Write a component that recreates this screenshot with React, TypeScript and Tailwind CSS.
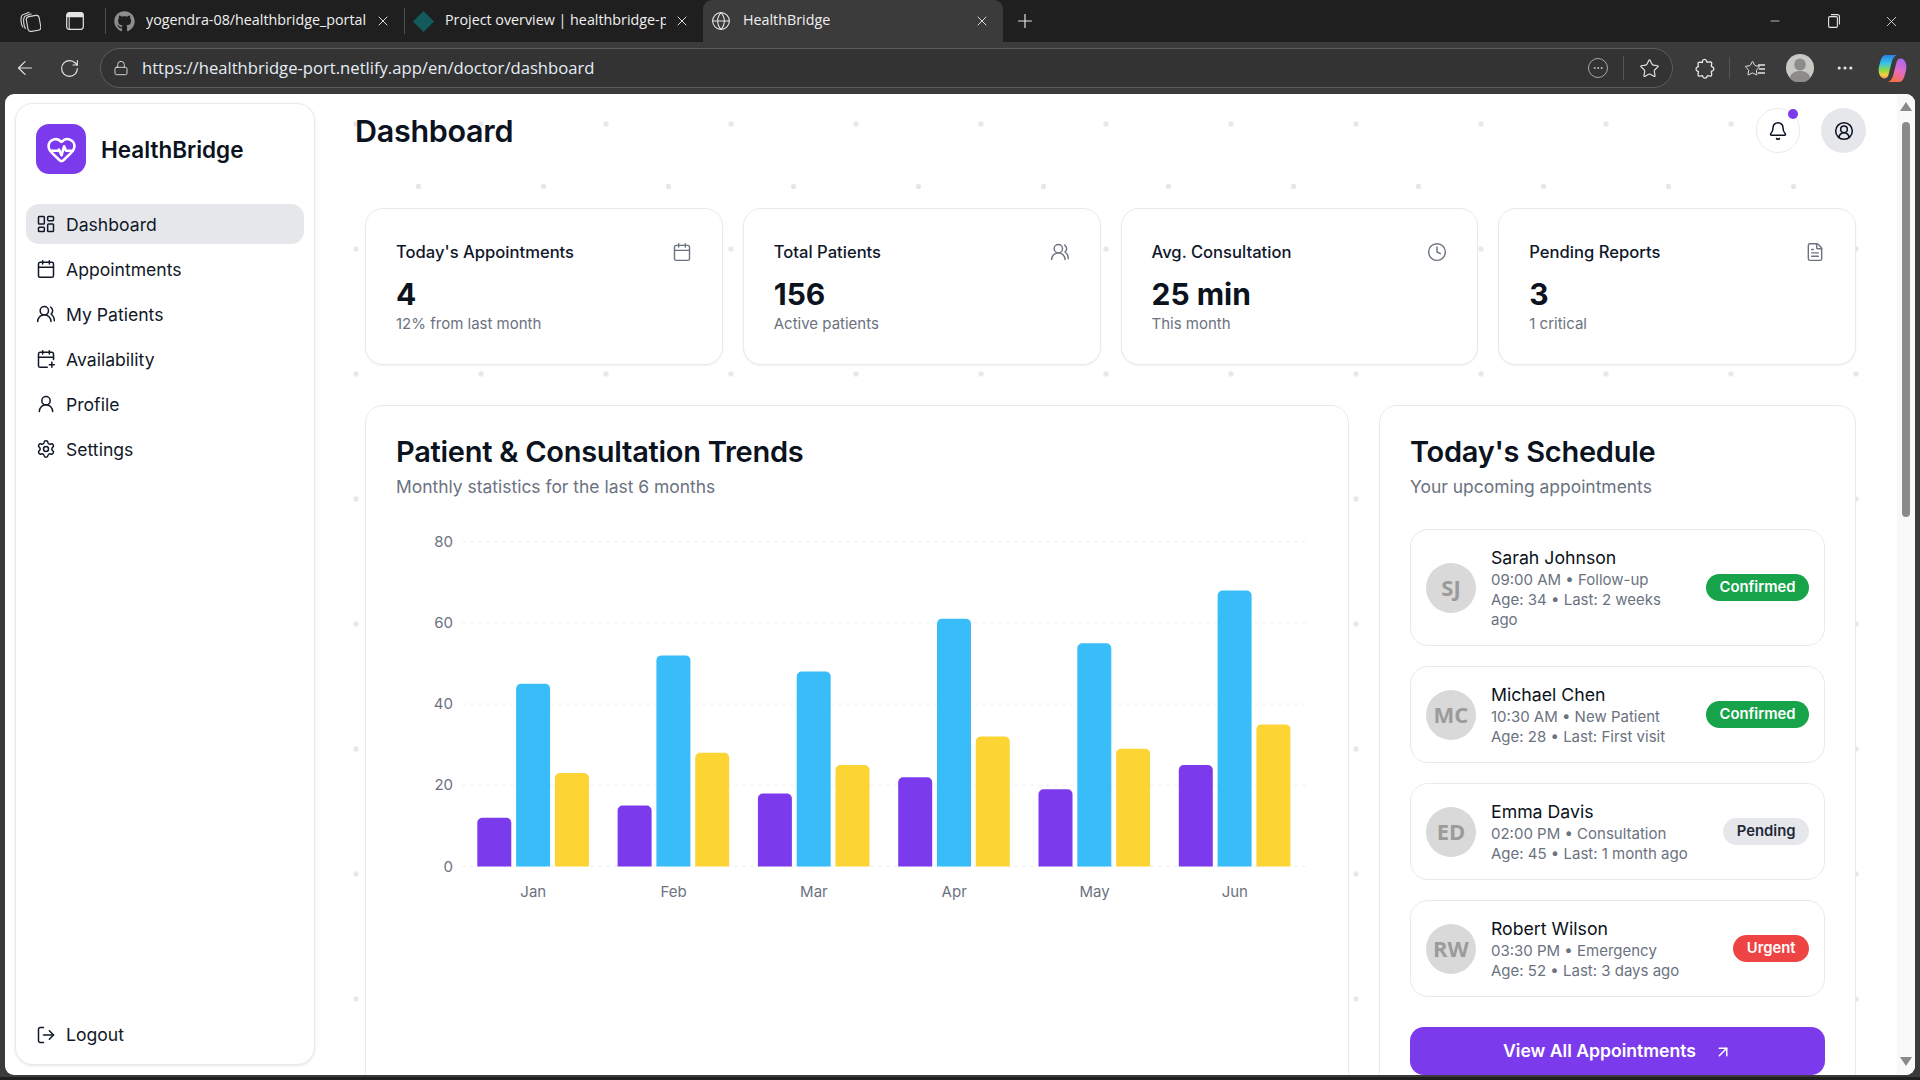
import { FC, ReactNode } from "react";
import {
  ArrowLeft,
  ArrowUpRight,
  Bell,
  Calendar,
  CalendarPlus,
  CircleUserRound,
  Clock,
  Ellipsis,
  FileText,
  Globe,
  HeartPulse,
  LayoutDashboard,
  Lock,
  LogOut,
  Minus,
  Plus,
  RotateCw,
  Settings,
  Star,
  UserRound,
  UsersRound,
  X,
} from "lucide-react";
import { FaGithub } from "react-icons/fa";

const navItems = [
  { label: "Dashboard", icon: LayoutDashboard, active: true },
  { label: "Appointments", icon: Calendar },
  { label: "My Patients", icon: UsersRound },
  { label: "Availability", icon: CalendarPlus },
  { label: "Profile", icon: UserRound },
  { label: "Settings", icon: Settings },
];

const stats = [
  { title: "Today's Appointments", value: "4", note: "12% from last month", icon: Calendar },
  { title: "Total Patients", value: "156", note: "Active patients", icon: UsersRound },
  { title: "Avg. Consultation", value: "25 min", note: "This month", icon: Clock },
  { title: "Pending Reports", value: "3", note: "1 critical", icon: FileText },
];

const chartData = [
  { month: "Jan", a: 12, b: 45, c: 23 },
  { month: "Feb", a: 15, b: 52, c: 28 },
  { month: "Mar", a: 18, b: 48, c: 25 },
  { month: "Apr", a: 22, b: 61, c: 32 },
  { month: "May", a: 19, b: 55, c: 29 },
  { month: "Jun", a: 25, b: 68, c: 35 },
];

const schedule = [
  { initials: "SJ", name: "Sarah Johnson", line1: "09:00 AM • Follow-up", line2: "Age: 34 • Last: 2 weeks ago", status: "Confirmed", badge: "bg-[#16a34a] text-white" },
  { initials: "MC", name: "Michael Chen", line1: "10:30 AM • New Patient", line2: "Age: 28 • Last: First visit", status: "Confirmed", badge: "bg-[#16a34a] text-white" },
  { initials: "ED", name: "Emma Davis", line1: "02:00 PM • Consultation", line2: "Age: 45 • Last: 1 month ago", status: "Pending", badge: "bg-[#e5e7eb] text-[#1f2937]" },
  { initials: "RW", name: "Robert Wilson", line1: "03:30 PM • Emergency", line2: "Age: 52 • Last: 3 days ago", status: "Urgent", badge: "bg-[#ef4444] text-white" },
];

const BASE_Y = 346.5;
const UNIT = 4.06;

const barPath = (x: number, value: number) => {
  const top = BASE_Y - value * UNIT;
  return `M${x} ${BASE_Y}V${top + 5}a5 5 0 0 1 5-5h24a5 5 0 0 1 5 5V${BASE_Y}Z`;
};

const Chart: FC = () => (
  <svg className="block mt-[19px]" width="922" height="400" viewBox="0 0 922 400">
    {[80, 60, 40, 20, 0].map((tick) => {
      const y = BASE_Y - tick * UNIT;
      return (
        <g key={tick}>
          <line x1="66" x2="912" y1={y} y2={y} stroke="#f0f1f3" strokeDasharray="4 4" />
          <text x="57" y={y + 5} textAnchor="end" fontSize="15" fill="#6b7280">
            {tick}
          </text>
        </g>
      );
    })}
    {chartData.map((d, i) => {
      const x = 81.3 + i * 140.3;
      return (
        <g key={d.month}>
          <path d={barPath(x, d.a)} fill="#7c3aed" />
          <path d={barPath(x + 38.8, d.b)} fill="#38bdf8" />
          <path d={barPath(x + 77.6, d.c)} fill="#fcd535" />
          <text x={x + 56} y="377" textAnchor="middle" fontSize="15" fill="#6b7280">
            {d.month}
          </text>
        </g>
      );
    })}
  </svg>
);

const Tab: FC<{ icon: ReactNode; title: string; active?: boolean; width: string }> = ({
  icon,
  title,
  active,
  width,
}) => (
  <div
    className={`${width} h-[42px] flex items-center pl-[5px] pr-[13px] shrink-0 ${
      active ? "bg-[#3b3b3b] rounded-t-[9px]" : ""
    }`}
  >
    <span className="w-[26px] mr-[9px] flex justify-center shrink-0">{icon}</span>
    <span className="flex-1 overflow-hidden whitespace-nowrap text-[14.3px] leading-[20px] -mt-[2px] text-[#f0f0f0]">{title}</span>
    <X size={16} strokeWidth={1.4} className="text-[#e8e8e8] ml-[8px] shrink-0" />
  </div>
);

const BrowserChrome: FC = () => (
  <div className="shrink-0 font-['Open_Sans',sans-serif]">
    <div className="h-[42px] bg-[#1f1f1f] flex items-center text-[#e5e5e5]">
      <div className="w-[105px] flex items-center shrink-0 pl-[20px] gap-[25px]">
        <svg width="21" height="21" viewBox="0 0 21 21" fill="none" stroke="#d8d8d8" strokeWidth="1.1">
          <path d="M3 16.5C1 14 .6 8 1.4 5.5c.3-1 1-1.7 2-2l6-2.3" />
          <path d="M5.6 18C3.6 15 3.2 9 4 6.8c.3-1 1-1.7 2-2l5.5-2" />
          <rect x="7" y="5" width="13" height="15" rx="3" transform="rotate(-10 13 12)" fill="#1f1f1f" />
        </svg>
        <svg width="18" height="18" viewBox="0 0 18 18" fill="none">
          <rect x=".7" y=".7" width="16.6" height="16.6" rx="2.5" stroke="#e5e5e5" strokeWidth="1.2" />
          <path d="M3 .7h12a2.3 2.3 0 0 1 2.3 2.3v2.3H.7V3A2.3 2.3 0 0 1 3 .7Z" fill="#e5e5e5" />
          <path d="M3.2 5v12.3" stroke="#e5e5e5" strokeWidth="1" />
        </svg>
      </div>
      <div className="w-px h-[26px] bg-[#4d4d4d] shrink-0" />
      <Tab width="w-[298px]" title="yogendra-08/healthbridge_portal" icon={<FaGithub size={21} className="text-[#8e8e8e]" />} />
      <div className="w-px h-[26px] bg-[#4d4d4d] shrink-0" />
      <Tab
        width="w-[298px]"
        title="Project overview | healthbridge-port"
        icon={<div className="w-[15px] h-[15px] rotate-45 bg-[#14595c]" />}
      />
      <Tab width="w-[300px]" active title="HealthBridge" icon={<Globe size={20} strokeWidth={1.3} className="text-[#e5e5e5]" />} />
      <Plus size={22} strokeWidth={1.3} className="ml-[11px]" />
      <div className="ml-auto flex items-center pr-[20px]">
        <Minus size={14} strokeWidth={1.3} />
        <svg className="ml-[46px]" width="12" height="14" viewBox="0 0 12 14" fill="none" stroke="#e5e5e5" strokeWidth="1.1">
          <rect x=".6" y="2.6" width="8.8" height="10.8" rx="1.3" />
          <path d="M3 .6h6.4a2 2 0 0 1 2 2v8" />
        </svg>
        <X size={17} strokeWidth={1.2} className="ml-[43px]" />
      </div>
    </div>
    <div className="h-[52px] bg-[#3b3b3b] flex items-center text-[#e5e5e5] pl-[14px]">
      <ArrowLeft size={22} strokeWidth={1.3} />
      <RotateCw size={21} strokeWidth={1.3} className="ml-[23px]" />
      <div className="ml-[20px] w-[1573px] h-[40px] rounded-full border border-[#5c5c5c] bg-[#333333] flex items-center pl-[12px] pr-[12px] shrink-0">
        <Lock size={16} strokeWidth={1.3} />
        <span className="ml-[13px] text-[16.64px] text-[#e6edf5]">https://healthbridge-port.netlify.app/en/doctor/dashboard</span>
        <div className="ml-auto flex items-center">
          <div className="w-[20px] h-[20px] rounded-full border border-[#a8a8a8] flex items-center justify-center text-[#c8c8c8]">
            <Ellipsis size={12} />
          </div>
          <div className="w-px h-[24px] bg-[#555555] mx-[15px]" />
          <Star size={21} strokeWidth={1.3} />
        </div>
      </div>
      <svg className="ml-[22px]" width="20" height="21" viewBox="0 0 20 21" fill="none" stroke="#e5e5e5" strokeWidth="1.3" strokeLinejoin="round">
        <path d="M7.5 2.8c.8-1.8 3.2-1.8 4 0l.4 1.4 3.4-.4c1 0 1.5.6 1.4 1.5l-.4 3 1.2.5c1.8.9 1.8 3.3 0 4.1l-1.2.5.4 3.2c0 1-.6 1.6-1.5 1.5l-2.8-.4-.5 1.2c-.9 1.7-3.2 1.6-4-.1l-.4-1.1-3 .4c-1 .1-1.6-.5-1.5-1.5l.4-3-1.1-.5c-1.7-.9-1.7-3.2 0-4l1.1-.5-.4-3c0-1 .5-1.5 1.5-1.5l2.9.4Z" />
      </svg>
      <div className="w-px h-[22px] bg-[#555555] ml-[14px]" />
      <span className="relative ml-[14px] w-[21px] h-[22px] flex items-center">
        <Star size={17} strokeWidth={1.4} />
        <svg className="absolute right-0 top-[7px]" width="9" height="10" viewBox="0 0 9 10" stroke="#e5e5e5" strokeWidth="1.3">
          <path d="M2 1h7M3 5h6M2 9h7" />
        </svg>
      </span>
      <svg className="ml-[21px]" width="28" height="28" viewBox="0 0 28 28">
        <circle cx="14" cy="14" r="14" fill="#c8c8c4" />
        <ellipse cx="14" cy="10.5" rx="5.8" ry="6" fill="#8e8c88" />
        <path d="M4 24.5c0-5 4.5-7.5 10-7.5s10 2.500 10 7.500a14 14 0 0 1-20 0Z" fill="#8e8c88" />
      </svg>
      <Ellipsis size={20} strokeWidth={1.8} className="ml-[21px]" />
      <svg className="ml-[23px]" width="29" height="29" viewBox="0 0 30 30">
        <defs>
          <linearGradient id="copilotA" x1="0.5" y1="0" x2="0.5" y2="1">
            <stop offset="0" stopColor="#2a7fe8" />
            <stop offset="0.35" stopColor="#35c3e8" />
            <stop offset="0.65" stopColor="#8fd94a" />
            <stop offset="0.85" stopColor="#f2d13c" />
            <stop offset="1" stopColor="#f08a6a" />
          </linearGradient>
          <linearGradient id="copilotB" x1="0.7" y1="0" x2="0.3" y2="1">
            <stop offset="0" stopColor="#a868ee" />
            <stop offset="0.5" stopColor="#e66cc0" />
            <stop offset="1" stopColor="#f5703c" />
          </linearGradient>
        </defs>
        <path d="M8 1H20C16 2 15 6 14 9L11 21C10 25 8 26 5 25C1 23 0 18 1 13L3 6C4 3 6 1 8 1Z" fill="url(#copilotA)" />
        <path d="M22 29H10C14 28 15 24 16 21L19 9C20 5 22 4 25 5C29 7 30 12 29 17L27 24C26 27 24 29 22 29Z" fill="url(#copilotB)" />
      </svg>
    </div>
  </div>
);

const Sidebar: FC = () => (
  <aside className="w-[300px] shrink-0 ml-[10px] mt-[9px] mb-[10px] bg-white rounded-[18px] border border-[#e9eaec] shadow-[0_1px_3px_rgba(0,0,0,0.1)] flex flex-col px-[10px] pt-[20px] pb-[9px]">
    <div className="flex items-center gap-[15px] pl-[10px]">
      <div className="w-[50px] h-[50px] rounded-[13px] bg-[#7c3aed] flex items-center justify-center">
        <HeartPulse size={31} strokeWidth={2} className="text-white" />
      </div>
      <span className="text-[22.5px] mt-[1px] font-semibold text-[#0b1220]">HealthBridge</span>
    </div>
    <nav className="mt-[30px] flex flex-col gap-[5px]">
      {navItems.map(({ label, icon: Icon, active }) => (
        <div
          key={label}
          className={`h-[40px] rounded-[13px] flex items-center gap-[10px] pl-[10px] text-[17.6px] text-[#111827] ${
            active ? "bg-[#e5e7eb]" : ""
          }`}
        >
          <Icon size={20} strokeWidth={1.8} />
          <span className="mt-[2px]">{label}</span>
        </div>
      ))}
    </nav>
    <div className="mt-auto h-[40px] flex items-center gap-[10px] pl-[10px] text-[17.6px] text-[#111827]">
      <LogOut size={20} strokeWidth={1.8} className="shrink-0" />
      Logout
    </div>
  </aside>
);

const StatCard: FC<(typeof stats)[number]> = ({ title, value, note, icon: Icon }) => (
  <div className="h-[157px] bg-white rounded-[18px] border border-[#e9eaec] shadow-[0_1px_2px_rgba(0,0,0,0.06)] px-[30px] pt-[31px]">
    <div className="flex items-center justify-between">
      <span className="text-[16.6px] font-medium text-[#0f172a] leading-[24px]">{title}</span>
      <Icon size={20} strokeWidth={1.7} className="text-[#6b7280]" />
    </div>
    <div className="mt-[10px] text-[30px] leading-[40px] font-bold text-[#0b1220]">{value}</div>
    <div className="text-[15px] leading-[20px] text-[#6b7280]">{note}</div>
  </div>
);

const ScheduleRow: FC<(typeof schedule)[number]> = ({ initials, name, line1, line2, status, badge }) => (
  <div className="bg-white rounded-[18px] border border-[#e9eaec] pl-[15px] pr-[15px] pt-[16px] pb-[15px] flex items-center">
    <div className="-mt-[1px] w-[50px] h-[50px] rounded-full bg-[#d9d9d9] flex items-center justify-center shrink-0 font-['Open_Sans',sans-serif] font-bold text-[22px] text-[#9b9b9b]">
      {initials}
    </div>
    <div className="ml-[15px] flex-1 min-w-0 pr-[16px]">
      <div className="text-[17.7px] leading-[24px] text-[#0b1220]">{name}</div>
      <div className="text-[15px] leading-[20px] text-[#6b7280]">{line1}</div>
      <div className="text-[15px] leading-[20px] text-[#6b7280]">{line2}</div>
    </div>
    <span className={`-mt-[1px] shrink-0 h-[27px] px-[13.500px] rounded-full flex items-center text-[14.8px] font-semibold ${badge}`}>
      {status}
    </span>
  </div>
);

const Scrollbar: FC = () => (
  <div className="w-[18px] shrink-0 bg-[#f9f9f9] flex flex-col items-center pt-[8px] pb-[9px]">
    <div className="w-0 h-0 border-x-[6px] border-x-transparent border-b-[9px] border-b-[#8a8a8a]" />
    <div className="mt-[11px] w-[8px] h-[395px] rounded-full bg-[#8a8a8a]" />
    <div className="mt-auto w-0 h-0 border-x-[6px] border-x-transparent border-t-[9px] border-t-[#8a8a8a]" />
  </div>
);

const App: FC = () => (
  <div className="h-screen overflow-hidden bg-[#3b3b3b] flex flex-col font-['Inter',sans-serif]">
    <BrowserChrome />
    <div className="flex-1 min-h-0 flex flex-col">
      <div className="flex-1 min-h-0 ml-[5px] mr-[5px] bg-white rounded-t-[9px] rounded-b-[9px] overflow-hidden flex">
        <Sidebar />
        <main className="flex-1 min-w-0 overflow-hidden pl-[40px] pr-[31px] pt-[14px] bg-[radial-gradient(circle,#e5e7eb_2.5px,transparent_3px),radial-gradient(circle,#e5e7eb_2.5px,transparent_3px)] bg-[size:125px_125px] bg-[position:-21.5px_-32.5px,41px_30px]">
          <header className="h-[45px] flex items-center">
            <h1 className="text-[30.5px] mt-[1px] font-semibold text-[#0b1220] tracking-[-0.3px]">Dashboard</h1>
            <div className="relative ml-auto w-[44px] h-[45px] rounded-full bg-white border border-[#e9eaec] flex items-center justify-center">
              <Bell size={20} strokeWidth={1.8} className="text-[#0b1220]" />
              <span className="absolute top-0 right-[1px] w-[10px] h-[10px] rounded-full bg-[#7c3aed]" />
            </div>
            <div className="ml-[21px] w-[45px] h-[45px] rounded-full bg-[#e5e7eb] flex items-center justify-center">
              <CircleUserRound size={20} strokeWidth={1.8} className="text-[#0b1220]" />
            </div>
          </header>
          <div className="mx-[10px] mt-[55px]">
            <div className="grid grid-cols-4 gap-[20px]">
              {stats.map((s) => (
                <StatCard key={s.title} {...s} />
              ))}
            </div>
            <div className="mt-[40px] grid grid-cols-[1fr_477px] gap-[30px] items-stretch">
              <section className="bg-white rounded-[18px] border border-[#e9eaec] px-[30px] pt-[26px] h-[900px]">
                <h2 className="text-[29px] leading-[40px] font-semibold tracking-[-0.27px] text-[#0b1220]">Patient &amp; Consultation Trends</h2>
                <p className="text-[17.45px] leading-[28px] text-[#6b7280] mt-[1px]">Monthly statistics for the last 6 months</p>
                <Chart />
              </section>
              <section className="bg-white rounded-[18px] border border-[#e9eaec] px-[30px] pt-[26px] h-[900px]">
                <h2 className="text-[29px] leading-[40px] font-semibold tracking-[-0.27px] text-[#0b1220]">Today's Schedule</h2>
                <p className="text-[17.45px] leading-[28px] text-[#6b7280] mt-[1px]">Your upcoming appointments</p>
                <div className="mt-[28px] flex flex-col gap-[20px]">
                  {schedule.map((row) => (
                    <ScheduleRow key={row.name} {...row} />
                  ))}
                </div>
                <button className="mt-[30px] w-full h-[48px] pt-[1px] rounded-[14px] bg-[#7c3aed] text-white text-[17.6px] font-semibold flex items-center justify-center gap-[18px]">
                  View All Appointments
                  <ArrowUpRight size={18} strokeWidth={2} />
                </button>
              </section>
            </div>
          </div>
        </main>
        <Scrollbar />
      </div>
      <div className="h-[5px] shrink-0 bg-[#1f1f1f] border-t-2 border-[#3b3b3b]" />
    </div>
  </div>
);

export default App;
